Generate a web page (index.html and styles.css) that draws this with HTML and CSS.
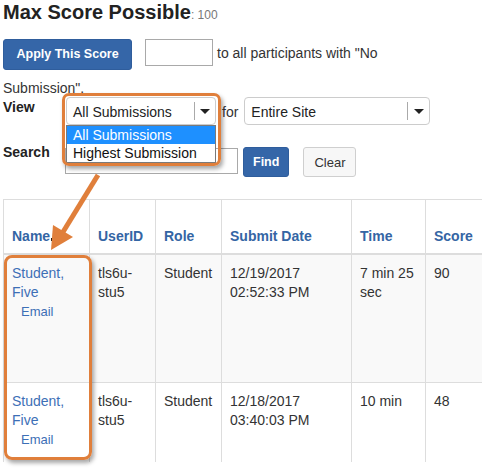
FILE: index.html
```html
<!DOCTYPE html>
<html>
<head>
<meta charset="utf-8">
<link rel="stylesheet" href="styles.css">
</head>
<body>
<div class="page">
  <h1 class="title">Max Score Possible<span class="max">: 100</span></h1>
  <p class="apply"><button class="btn btn-primary apply-btn">Apply This Score</button><input class="score-input" type="text"> to all participants with "No Submission".</p>

  <div class="view-row">
    <span class="lbl view-lbl">View</span>
    <div class="dd-wrap">
      <div class="select sel-view"><span class="sel-text">All Submissions</span><span class="caret-box"><span class="caret"></span></span></div>
      <ul class="dd-list">
        <li class="dd-item active">All Submissions</li>
        <li class="dd-item">Highest Submission</li>
      </ul>
      <div class="hl-frame frame-dd"></div>
    </div>
    <span class="for">for</span>
    <div class="select sel-site"><span class="sel-text">Entire Site</span><span class="caret-box wide"><span class="caret"></span></span></div>
  </div>

  <div class="search-row">
    <span class="lbl search-lbl">Search</span>
    <input class="search-input" type="text">
    <button class="btn btn-primary find-btn">Find</button>
    <button class="btn btn-default clear-btn">Clear</button>
  </div>

  <div class="grid-wrap">
    <table class="grid">
      <colgroup>
        <col class="c-name"><col class="c-uid"><col class="c-role"><col class="c-date"><col class="c-time"><col class="c-score">
      </colgroup>
      <thead>
        <tr><th>Name<span class="sort"></span></th><th>UserID</th><th>Role</th><th>Submit Date</th><th>Time</th><th>Score</th></tr>
      </thead>
      <tbody>
        <tr class="row-odd">
          <td><a class="stu">Student, Five</a><a class="email">Email</a></td>
          <td>tls6u-stu5</td><td>Student</td><td>12/19/2017 02:52:33 PM</td><td>7 min 25 sec</td><td>90</td>
        </tr>
        <tr class="row-even">
          <td><a class="stu">Student, Five</a><a class="email">Email</a></td>
          <td>tls6u-stu5</td><td>Student</td><td>12/18/2017 03:40:03 PM</td><td>10 min</td><td>48</td>
        </tr>
      </tbody>
    </table>
    <div class="hl-frame frame-name"></div>
  </div>

  <svg class="arrow" width="482" height="473" viewBox="0 0 482 473">
    <line x1="98" y1="175" x2="63" y2="232" stroke="#e07f3b" stroke-width="5"/>
    <polygon points="51,250 53,225 73,237" fill="#e07f3b"/>
  </svg>
</div>
</body>
</html>
```

FILE: styles.css
```css
html, body {
  margin: 0;
  padding: 0;
  background: #fff;
}
body {
  font-family: "Liberation Sans", Arial, sans-serif;
  font-size: 14px;
  color: #333;
  overflow: hidden;
}
.page {
  position: relative;
  padding-left: 3px;
  width: 479px;
  height: 473px;
}
.title {
  margin: 0;
  padding-top: 1px;
  font-size: 20px;
  line-height: 23px;
  font-weight: bold;
  color: #222;
}
.max {
  font-size: 12px;
  font-weight: normal;
  color: #777;
}
.apply {
  margin: 9.5px 0 0;
  width: 420px;
  line-height: 33px;
}
.btn {
  font-family: "Liberation Sans", Arial, sans-serif;
  border-radius: 3px;
  cursor: pointer;
  box-sizing: border-box;
  margin: 0;
}
.btn-primary {
  background: #3566a8;
  border: 1px solid #2f5d9c;
  color: #fff;
  font-weight: bold;
  font-size: 12.5px;
}
.btn-default {
  background: #f7f7f7;
  border: 1px solid #cfcfcf;
  color: #333;
  font-size: 13px;
}
.apply-btn {
  display: inline-block;
  vertical-align: baseline;
  height: 31px;
  line-height: 29px;
  padding: 0 12.5px;
  margin: 0 13px 2.5px 0;
}
.score-input {
  box-sizing: border-box;
  width: 68px;
  height: 27px;
  border: 1px solid #a9a9a9;
  margin: 0;
  padding: 0;
  vertical-align: baseline;
  font-size: 14px;
}
.view-row {
  display: flex;
  align-items: flex-start;
  margin-top: -8px;
}
.lbl {
  font-weight: bold;
  line-height: 20px;
  color: #222;
}
.view-lbl {
  width: 63px;
}
.dd-wrap {
  position: relative;
  width: 150px;
  height: 28px;
}
.select {
  box-sizing: border-box;
  display: flex;
  height: 28px;
  border: 1px solid #ccc;
  border-radius: 4px;
  background: #fff;
}
.sel-view {
  width: 150px;
}
.sel-site {
  width: 186px;
  margin-left: 6px;
}
.sel-text {
  flex: 1;
  padding-left: 6px;
  padding-top: 1px;
  line-height: 26px;
  color: #222;
}
.caret-box {
  width: 20px;
  margin: 4px 0;
  border-left: 1px solid #aaa;
  display: flex;
  align-items: center;
  justify-content: center;
}
.caret-box.wide {
  width: 21px;
}
.caret {
  width: 0;
  height: 0;
  border-left: 5px solid transparent;
  border-right: 5px solid transparent;
  border-top: 5px solid #222;
}
.for {
  margin-left: 6px;
  line-height: 28px;
  padding-top: 1px;
  color: #333;
}
.dd-list {
  position: absolute;
  left: 0;
  top: 28px;
  width: 150px;
  box-sizing: border-box;
  margin: 0;
  padding: 0;
  list-style: none;
  background: #fff;
  border: 1px solid #7a7a7a;
  z-index: 5;
}
.dd-item {
  height: 18px;
  line-height: 18px;
  padding-left: 6px;
  color: #111;
}
.dd-item.active {
  background: #1e90ff;
  color: #fff;
}
.hl-frame {
  position: absolute;
  box-sizing: border-box;
  border: 3px solid #e07f3b;
  border-radius: 7px;
  box-shadow: 2px 3px 4px rgba(0, 0, 0, 0.35);
  z-index: 6;
}
.frame-dd {
  left: -4px;
  top: -4px;
  width: 159px;
  height: 73px;
}
.search-row {
  display: flex;
  align-items: flex-start;
  margin-top: 16px;
}
.search-lbl {
  width: 62px;
}
.search-input {
  box-sizing: border-box;
  width: 173px;
  height: 26px;
  margin: 6px 0 0;
  padding: 0;
  border: 1px solid #a9a9a9;
}
.find-btn {
  margin-top: 5px;
  margin-left: 5px;
  height: 30px;
  padding: 0 9px;
}
.clear-btn {
  margin-top: 5px;
  margin-left: 14px;
  height: 30px;
  padding: 0 10px;
}
.grid-wrap {
  position: relative;
  margin-top: 22px;
}
.grid {
  border-collapse: collapse;
  table-layout: fixed;
  width: 479px;
}
.c-name { width: 86px; }
.c-uid { width: 66px; }
.c-role { width: 66px; }
.c-date { width: 130px; }
.c-time { width: 74px; }
.c-score { width: 57px; }
.grid th, .grid td {
  border: 1px solid #ddd;
  text-align: left;
  line-height: 19px;
  padding: 9px 8px;
  vertical-align: top;
  font-size: 14px;
}
.grid th {
  vertical-align: bottom;
  border-bottom: 2px solid #ddd;
  color: #3465a4;
  font-weight: bold;
  padding: 8px 8px 7px;
  height: 38px;
  line-height: 20px;
}
.sort {
  display: inline-block;
  width: 4px;
  height: 3px;
  background: #111;
  margin-left: 1px;
}
.row-odd td {
  background: #f9f9f9;
  height: 109px;
}
.row-even td {
  background: #fff;
  height: 61px;
  border-bottom: none;
}
.stu {
  display: block;
  color: #3d6fb6;
}
.email {
  display: block;
  color: #3d6fb6;
  font-size: 13px;
  padding-left: 9px;
}
.frame-name {
  left: 1px;
  top: 56px;
  width: 88px;
  height: 205px;
  border-radius: 8px;
}
.arrow {
  position: absolute;
  left: 0;
  top: 0;
  pointer-events: none;
  z-index: 10;
}
```
